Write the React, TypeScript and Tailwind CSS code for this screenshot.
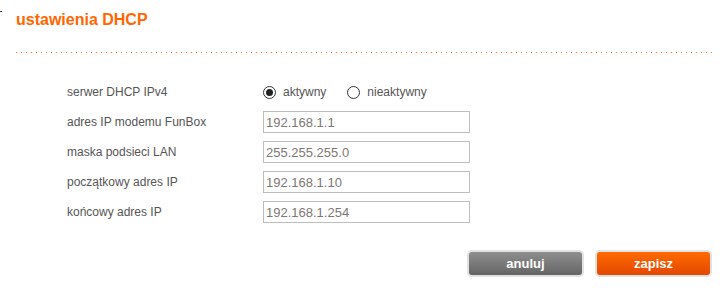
import React from 'react';

const rows = [
  { label: 'adres IP modemu FunBox', value: '192.168.1.1' },
  { label: 'maska podsieci LAN', value: '255.255.255.0' },
  { label: 'początkowy adres IP', value: '192.168.1.10' },
  { label: 'końcowy adres IP', value: '192.168.1.254' },
];

function Radio({ checked, label }: { checked?: boolean; label: string }) {
  return (
    <label className="flex items-center gap-[7px] cursor-pointer">
      <span className="w-[13px] h-[13px] rounded-full border border-[#333] bg-white flex items-center justify-center">
        {checked && <span className="w-[7px] h-[7px] rounded-full bg-[#222]" />}
      </span>
      <span>{label}</span>
    </label>
  );
}

export default function App() {
  return (
    <div className="w-[728px] h-[292px] bg-white font-['Liberation_Sans',Arial,sans-serif] text-[12px] text-[#555] relative">
      <span className="absolute left-0 top-[11px] w-[2px] h-[1px] bg-[#7a2a10]" />
      <div className="px-4 pt-[10px]">
        <h1 className="text-[16px] leading-[20px] font-bold text-[#ff6600]">ustawienia DHCP</h1>
        <div className="mt-[22px] h-[1px] bg-[linear-gradient(to_right,#ff7a1a_1px,transparent_1px)] bg-size-[5px_1px]" />
      </div>

      <div className="mt-[24px] pl-[67px]">
        <div className="flex items-center h-[30px]">
          <div className="w-[196px]">serwer DHCP IPv4</div>
          <div className="flex items-center gap-[21px]">
            <Radio checked label="aktywny" />
            <Radio label="nieaktywny" />
          </div>
        </div>
        {rows.map((r) => (
          <div key={r.label} className="flex items-center h-[30px]">
            <div className="w-[196px]">{r.label}</div>
            <input
              type="text"
              defaultValue={r.value}
              className="w-[207px] h-[22px] border border-[#bdbdbd] px-[2px] text-[13px] text-[#7d7774] outline-none font-['Liberation_Sans',Arial,sans-serif]"
            />
          </div>
        ))}
      </div>

      <div className="mt-[23px] pr-4 flex justify-end gap-[11px]">
        <button className="w-[117px] h-[27px] rounded-[5px] border-2 border-[#e2e2e2] bg-[linear-gradient(#8e8e8e,#656565)] text-white font-bold text-[13px]">
          anuluj
        </button>
        <button className="w-[117px] h-[27px] rounded-[5px] border-2 border-[#e2e2e2] bg-[linear-gradient(#ff6a00,#e34800)] text-white font-bold text-[13px]">
          zapisz
        </button>
      </div>
    </div>
  );
}
